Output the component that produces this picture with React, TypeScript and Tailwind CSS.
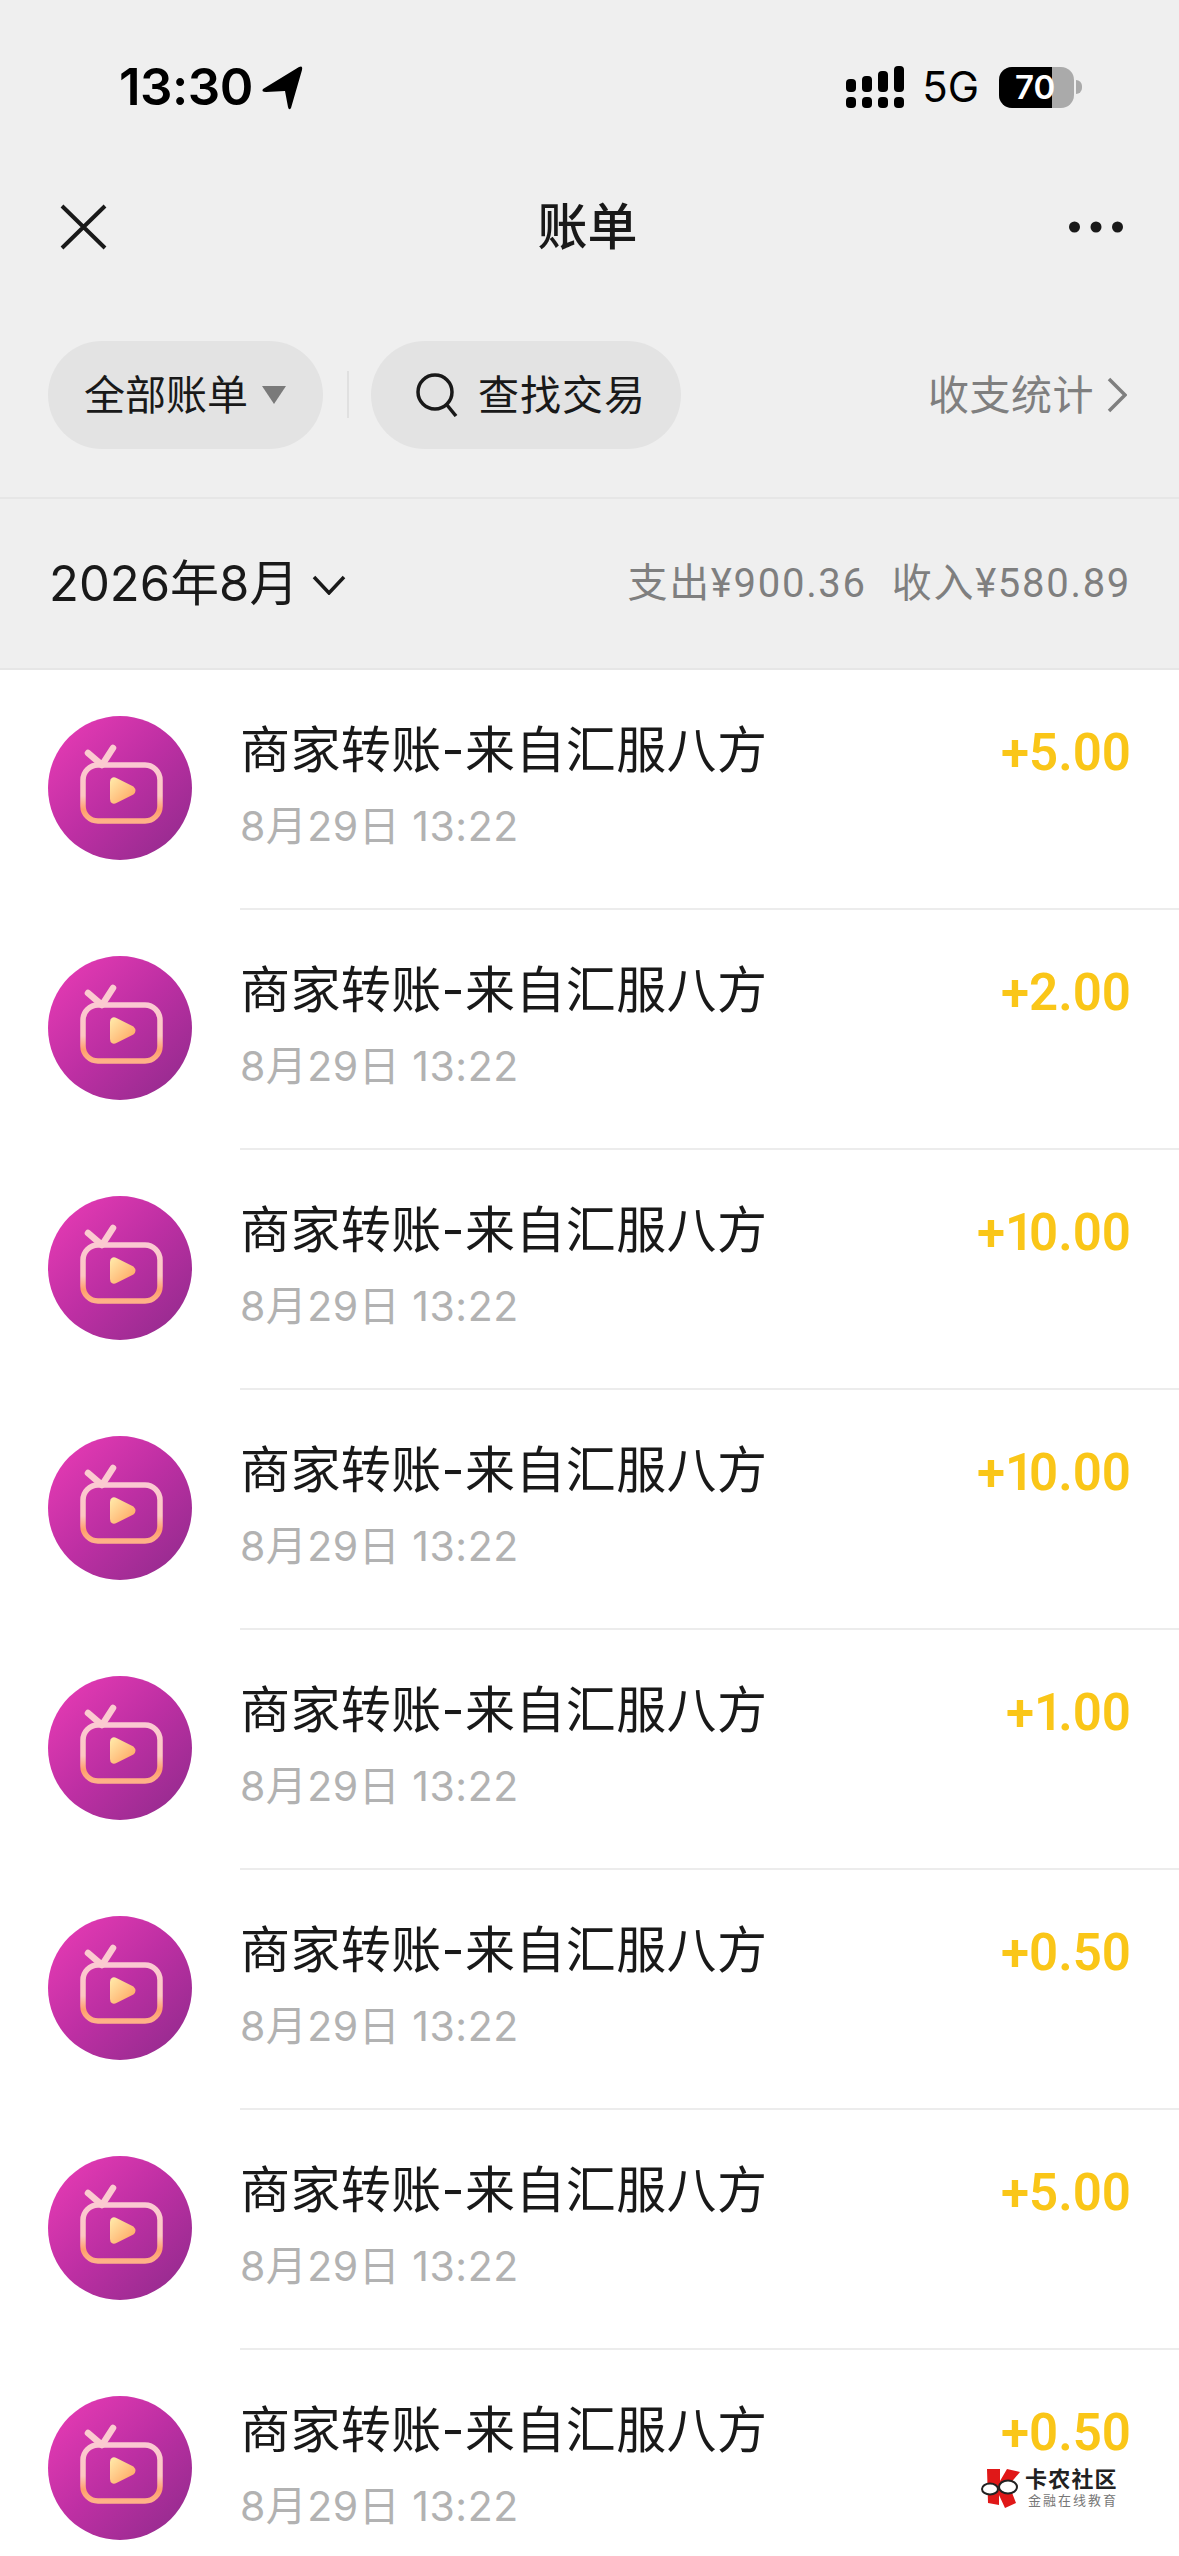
import React from "react";

const FONT = "font-['Inter','Noto_Sans_CJK_SC',sans-serif]";

function TvIcon() {
  return (
    <div className="w-[144px] h-[144px] rounded-full shrink-0 bg-gradient-to-br from-[#ec3cb6] via-[#bd2fa3] to-[#8e2a8b] flex items-center justify-center">
      <svg width="144" height="144" viewBox="0 0 144 144" fill="none">
        <defs>
          <linearGradient id="tv" x1="0" y1="0" x2="0" y2="1">
            <stop offset="0" stopColor="#fbc9d2" />
            <stop offset="0.55" stopColor="#fcc8c0" />
            <stop offset="0.8" stopColor="#ff9f6c" />
            <stop offset="1" stopColor="#ffb288" />
          </linearGradient>
          <linearGradient id="pl" x1="0" y1="0" x2="1" y2="1">
            <stop offset="0" stopColor="#ffe6a6" />
            <stop offset="1" stopColor="#ffa562" />
          </linearGradient>
        </defs>
        <rect x="35" y="49" width="77" height="56" rx="15" stroke="url(#tv)" strokeWidth="5.5" />
        <path d="M40 37 L54 49 L65 32" stroke="#fbcbd0" strokeWidth="6.5" strokeLinecap="round" strokeLinejoin="round" />
        <path d="M64 66 Q64 62 68 64 L84 72 Q87 75 84 77 L68 85 Q64 87 64 83 Z" fill="url(#pl)" stroke="url(#pl)" strokeWidth="4" strokeLinejoin="round" />
      </svg>
    </div>
  );
}

const amounts = ["+5.00", "+2.00", "+10.00", "+10.00", "+1.00", "+0.50", "+5.00", "+0.50"];

function Amount({ value }: { value: string }) {
  const isOne = value.startsWith("+1");
  return (
    <div className="text-[51px] leading-[60px] font-semibold font-['Roboto',sans-serif] text-[#fac618] pt-[53px]">
      {isOne ? (
        <>
          +<span className="tracking-[-5px]">1</span>
          {value.slice(2)}
        </>
      ) : (
        value
      )}
    </div>
  );
}

function Row({ amount, last }: { amount: string; last: boolean }) {
  return (
    <div className="h-[240px] flex items-start pl-[48px] shrink-0">
      <div className="pt-[46px] pr-[48px]">
        <TvIcon />
      </div>
      <div className={`flex-1 h-[240px] flex pr-[48px] ${last ? "" : "border-b-2 border-[#ececec]"}`}>
        <div className="flex-1 flex flex-col pt-[50px]">
          <div className="text-[50px] leading-[60px] text-[#191919] tracking-[0.4px]">商家转账-来自汇服八方</div>
          <div className="text-[41px] leading-[50px] text-[#b2b2b2] mt-[21px] tracking-[0.5px]">8月29日 13:22</div>
        </div>
        <Amount value={amount} />
      </div>
    </div>
  );
}

export default function App() {
  return (
    <div className={`w-[1179px] h-[2556px] overflow-hidden bg-white relative flex flex-col ${FONT}`}>
      <div className="bg-[#efefef] shrink-0">
        {/* status bar */}
        <div className="h-[150px] pt-[57px] pl-[119px] pr-[97px] flex items-start justify-between">
          <div className="flex items-center h-[60px]">
            <span className="text-[51px] leading-[60px] font-semibold text-black tracking-[-0.5px]">13:30</span>
            <svg width="42" height="46" viewBox="0 0 42 46" className="ml-[8px] mt-[2px]">
              <path d="M2 24 L38 2 Q42 0 41 5 L30 43 Q28 46 27 42 L24 26 L5 27 Q0 27 2 24Z" fill="#000" />
            </svg>
          </div>
          <div className="flex items-center h-[60px]">
            <svg width="60" height="42" viewBox="0 0 60 42" fill="#000" className="ml-[1px]">
              <rect x="0" y="13" width="10" height="13" rx="4" />
              <rect x="16" y="10" width="10" height="16" rx="4" />
              <rect x="32" y="5" width="10" height="21" rx="4" />
              <rect x="48" y="0" width="10" height="26" rx="4" />
              <rect x="0" y="31" width="10" height="11" rx="4" />
              <rect x="16" y="31" width="10" height="11" rx="4" />
              <rect x="32" y="31" width="10" height="11" rx="4" />
              <rect x="48" y="31" width="10" height="11" rx="4" />
            </svg>
            <span className="text-[42px] leading-[44px] text-black ml-[16px] font-normal">5G</span>
            <div className="ml-[20px] relative w-[75px] h-[41px] rounded-[13px] overflow-hidden bg-[#aaaaaa]">
              <div className="absolute inset-y-0 left-0 w-[53px] bg-black" />
              <span className="absolute inset-0 pl-[16px] text-[33px] leading-[41px] font-semibold text-white">70</span>
            </div>
            <div className="w-[6px] h-[14px] ml-[2px] rounded-r-full bg-[#aaaaaa]" />
          </div>
        </div>

        {/* title bar */}
        <div className="h-[150px] relative flex items-center justify-between pl-[60px] pr-[56px] pt-[3px]">
          <svg width="48" height="46" viewBox="0 0 48 46" stroke="#191919" strokeWidth="4" fill="none">
            <path d="M2 2 L45 44 M45 2 L2 44" />
          </svg>
          <span className="absolute left-0 right-[4px] text-center text-[50px] leading-[60px] font-medium text-[#191919]">账单</span>
          <svg width="54" height="12" viewBox="0 0 54 12" fill="#191919">
            <circle cx="5.5" cy="6" r="5.5" />
            <circle cx="27" cy="6" r="5.5" />
            <circle cx="48.5" cy="6" r="5.5" />
          </svg>
        </div>

        {/* filters */}
        <div className="h-[199px] pt-[41px] pl-[48px] pr-[48px] flex items-start border-b-2 border-[#e6e6e6]">
          <div className="h-[108px] w-[275px] rounded-full bg-[#e3e3e3] flex items-center pl-[36px]">
            <span className="text-[41px] leading-[50px] text-[#191919]">全部账单</span>
            <svg width="24" height="18" viewBox="0 0 24 18" className="ml-[14px]"><path d="M0 0H24L12 18Z" fill="#7a7a7a" /></svg>
          </div>
          <div className="w-[2px] h-[47px] bg-[#e0e0e0] mt-[30px] ml-[24px] mr-[22px]" />
          <div className="h-[108px] w-[310px] rounded-full bg-[#e3e3e3] flex items-center pl-[45px]">
            <svg width="42" height="44" viewBox="0 0 42 44" stroke="#191919" strokeWidth="3.5" fill="none">
              <circle cx="19" cy="19" r="17" />
              <path d="M31 32 L40 43" />
            </svg>
            <span className="text-[41px] leading-[50px] text-[#191919] ml-[20px] tracking-[1px]">查找交易</span>
          </div>
          <div className="ml-auto h-[108px] flex items-center">
            <span className="text-[41px] leading-[50px] text-[#7f7f7f] tracking-[0.5px]">收支统计</span>
            <svg width="20" height="36" viewBox="0 0 20 36" stroke="#7f7f7f" strokeWidth="3.5" fill="none" className="ml-[13px] mr-[4px]">
              <path d="M2 2 L18 18 L2 34" />
            </svg>
          </div>
        </div>

        {/* month */}
        <div className="h-[171px] pl-[49px] pr-[48px] flex items-center justify-between border-b-2 border-[#e6e6e6]">
          <div className="flex items-center">
            <span className="text-[49px] leading-[60px] text-[#191919]">2026年8月</span>
            <svg width="34" height="20" viewBox="0 0 34 20" stroke="#191919" strokeWidth="3.5" fill="none" className="ml-[14px] mt-[2px]">
              <path d="M2 2 L17 18 L32 2" />
            </svg>
          </div>
          <div className="flex items-center text-[40px] leading-[50px] text-[#7f7f7f] tracking-[1.7px] font-['Roboto','Noto_Sans_CJK_SC',sans-serif]">
            <span>支出¥900.36</span>
            <span className="ml-[25px]">收入¥580.89</span>
          </div>
        </div>
      </div>

      <div className="flex flex-col">
        {amounts.map((a, i) => (
          <Row key={i} amount={a} last={i === amounts.length - 1} />
        ))}
      </div>

      {/* watermark */}
      <div className="absolute left-[981px] top-[2467px] flex items-start">
        <svg width="40" height="42" viewBox="0 0 40 42">
          <path d="M6 2H19V14L26 2L39 5L28 18L35 36L24 41L18 28V38L7 36Z" fill="#e01818" />
          <ellipse cx="9" cy="22" rx="8" ry="5.5" fill="#fff" stroke="#222" strokeWidth="2" />
          <ellipse cx="27" cy="20" rx="9" ry="6.5" fill="#fff" stroke="#222" strokeWidth="2" />
        </svg>
        <div className="ml-[4px] flex flex-col">
          <span className="text-[22px] leading-[24px] font-bold text-[#222] tracking-[1.2px]">卡农社区</span>
          <span className="text-[13px] leading-[16px] mt-[1px] ml-[3px] text-[#777] tracking-[2px]">金融在线教育</span>
        </div>
      </div>
    </div>
  );
}
